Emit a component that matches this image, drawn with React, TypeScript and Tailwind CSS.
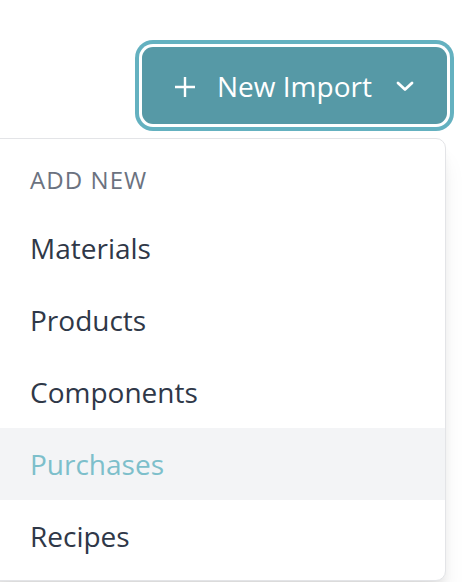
import React from "react";

const items = ["Materials", "Products", "Components", "Purchases", "Recipes"];

export default function App() {
  return (
    <div
      className="w-[462px] h-[582px] overflow-hidden bg-white"
      style={{ fontFamily: '"Open Sans", "Noto Sans", sans-serif' }}
    >
      <div className="flex justify-end pt-[47px] pr-[15px]">
        <button
          type="button"
          className="flex items-center w-[305px] h-[77px] rounded-[11px] bg-[#5699a6] pl-[32px] text-white shadow-[0_0_0_3px_#ffffff,0_0_0_7px_#64b1c0]"
        >
          <svg width="22" height="22" viewBox="0 0 22 22" className="mt-[3px]">
            <path d="M11 1 V21 M1 11 H21" stroke="white" strokeWidth="2.4" fill="none" />
          </svg>
          <span className="ml-[21px] text-[28px] leading-[40px] font-normal">New Import</span>
          <svg width="18" height="11" viewBox="0 0 18 11" className="ml-[24px] mt-[1px]">
            <path
              d="M2 2 L9 8.5 L16 2"
              stroke="white"
              strokeWidth="2.8"
              fill="none"
              strokeLinecap="round"
              strokeLinejoin="round"
            />
          </svg>
        </button>
      </div>
      <div className="mt-[14px] ml-[-12px] w-[458px] rounded-[10px] border border-[#e3e4e7] bg-white pb-[8px] shadow-[0_20px_25px_-5px_rgba(0,0,0,0.1),0_8px_12px_-4px_rgba(0,0,0,0.08)]">
        <div className="pl-[41px] pt-[25px] pb-[16px] text-[24px] leading-[32px] uppercase tracking-[0.045em] text-[#6b7280]">
          Add new
        </div>
        {items.map((it) => (
          <div
            key={it}
            className={
              it === "Purchases"
                ? "flex h-[72px] items-center pl-[41px] text-[28px] bg-[#f3f4f6] text-[#7dbfcb]"
                : "flex h-[72px] items-center pl-[41px] text-[28px] text-[#2f3848]"
            }
          >
            {it}
          </div>
        ))}
      </div>
    </div>
  );
}
